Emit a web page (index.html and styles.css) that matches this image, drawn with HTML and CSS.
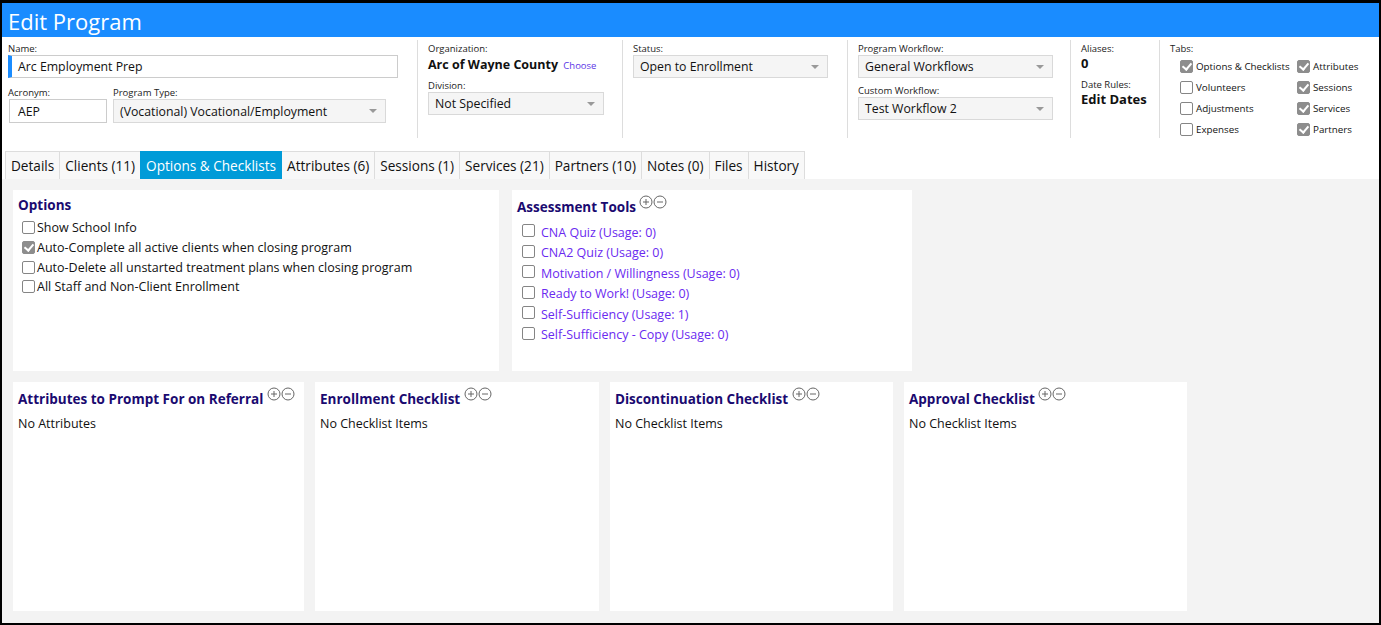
FILE: index.html
```html
<html lang="en">
<head>
    <meta charset="UTF-8">
    <title>Edit Program</title>
    <link rel="stylesheet" href="styles.css">
</head>
<body>
<div class="frame">
    <div class="titlebar">Edit Program</div>

    <div class="fields">
        <div class="col col-main">
            <label class="lbl">Name:</label>
            <div class="input name-input">Arc Employment Prep</div>
            <div class="field-row">
                <div>
                    <label class="lbl">Acronym:</label>
                    <div class="input acronym">AEP</div>
                </div>
                <div>
                    <label class="lbl">Program Type:</label>
                    <div class="select type-select">(Vocational) Vocational/Employment</div>
                </div>
            </div>
        </div>
        <div class="col col-org">
            <label class="lbl">Organization:</label>
            <div class="org">Arc of Wayne County <a class="choose">Choose</a></div>
            <label class="lbl gap">Division:</label>
            <div class="select">Not Specified</div>
        </div>
        <div class="col col-status">
            <label class="lbl">Status:</label>
            <div class="select">Open to Enrollment</div>
        </div>
        <div class="col col-flow">
            <label class="lbl">Program Workflow:</label>
            <div class="select">General Workflows</div>
            <label class="lbl gap">Custom Workflow:</label>
            <div class="select">Test Workflow 2</div>
        </div>
        <div class="col col-alias">
            <label class="lbl">Aliases:</label>
            <div class="big">0</div>
            <label class="lbl gap">Date Rules:</label>
            <div class="big dates">Edit Dates</div>
        </div>
        <div class="col col-tabs">
            <label class="lbl">Tabs:</label>
            <div class="tab-grid">
                <div class="tick"><span class="cb on"></span>Options &amp; Checklists</div>
                <div class="tick"><span class="cb on"></span>Attributes</div>
                <div class="tick"><span class="cb"></span>Volunteers</div>
                <div class="tick"><span class="cb on"></span>Sessions</div>
                <div class="tick"><span class="cb"></span>Adjustments</div>
                <div class="tick"><span class="cb on"></span>Services</div>
                <div class="tick"><span class="cb"></span>Expenses</div>
                <div class="tick"><span class="cb on"></span>Partners</div>
            </div>
        </div>
    </div>

    <div class="tabs">
        <div class="tab">Details</div>
        <div class="tab">Clients (11)</div>
        <div class="tab active">Options &amp; Checklists</div>
        <div class="tab">Attributes (6)</div>
        <div class="tab">Sessions (1)</div>
        <div class="tab">Services (21)</div>
        <div class="tab">Partners (10)</div>
        <div class="tab">Notes (0)</div>
        <div class="tab">Files</div>
        <div class="tab">History</div>
    </div>

    <div class="content">
        <div class="row row-top">
            <div class="panel p-options">
                <h4>Options</h4>
                <div class="opt"><span class="cb"></span>Show School Info</div>
                <div class="opt"><span class="cb on"></span>Auto-Complete all active clients when closing program</div>
                <div class="opt"><span class="cb"></span>Auto-Delete all unstarted treatment plans when closing program</div>
                <div class="opt"><span class="cb"></span>All Staff and Non-Client Enrollment</div>
            </div>
            <div class="panel p-tools">
                <h4>Assessment Tools <span class="pm"><svg viewBox="0 0 14 14"><circle cx="7" cy="7" r="6"/><path d="M7 4v6M4 7h6"/></svg><svg viewBox="0 0 14 14"><circle cx="7" cy="7" r="6"/><path d="M4 7h6"/></svg></span></h4>
                <div class="tool"><span class="cb"></span><a>CNA Quiz (Usage: 0)</a></div>
                <div class="tool"><span class="cb"></span><a>CNA2 Quiz (Usage: 0)</a></div>
                <div class="tool"><span class="cb"></span><a>Motivation / Willingness (Usage: 0)</a></div>
                <div class="tool"><span class="cb"></span><a>Ready to Work! (Usage: 0)</a></div>
                <div class="tool"><span class="cb"></span><a>Self-Sufficiency (Usage: 1)</a></div>
                <div class="tool"><span class="cb"></span><a>Self-Sufficiency - Copy (Usage: 0)</a></div>
            </div>
        </div>
        <div class="row row-bottom">
            <div class="panel p-attr">
                <h4>Attributes to Prompt For on Referral <span class="pm"><svg viewBox="0 0 14 14"><circle cx="7" cy="7" r="6"/><path d="M7 4v6M4 7h6"/></svg><svg viewBox="0 0 14 14"><circle cx="7" cy="7" r="6"/><path d="M4 7h6"/></svg></span></h4>
                <div class="empty">No Attributes</div>
            </div>
            <div class="panel p-check">
                <h4>Enrollment Checklist <span class="pm"><svg viewBox="0 0 14 14"><circle cx="7" cy="7" r="6"/><path d="M7 4v6M4 7h6"/></svg><svg viewBox="0 0 14 14"><circle cx="7" cy="7" r="6"/><path d="M4 7h6"/></svg></span></h4>
                <div class="empty">No Checklist Items</div>
            </div>
            <div class="panel p-check">
                <h4>Discontinuation Checklist <span class="pm"><svg viewBox="0 0 14 14"><circle cx="7" cy="7" r="6"/><path d="M7 4v6M4 7h6"/></svg><svg viewBox="0 0 14 14"><circle cx="7" cy="7" r="6"/><path d="M4 7h6"/></svg></span></h4>
                <div class="empty">No Checklist Items</div>
            </div>
            <div class="panel p-check">
                <h4>Approval Checklist <span class="pm"><svg viewBox="0 0 14 14"><circle cx="7" cy="7" r="6"/><path d="M7 4v6M4 7h6"/></svg><svg viewBox="0 0 14 14"><circle cx="7" cy="7" r="6"/><path d="M4 7h6"/></svg></span></h4>
                <div class="empty">No Checklist Items</div>
            </div>
        </div>
    </div>
</div>
</body>
</html>
```

FILE: styles.css
```css
*{
    box-sizing: border-box;
}
body{
    margin: 0;
    font-family: "Open Sans", "Noto Sans", Arial, sans-serif;
    font-size: 12.5px;
    color: #111;
    background: #fff;
}
.frame{
    width: 1381px;
    height: 625px;
    border: 2px solid #000;
    border-top-width: 3px;
    display: flex;
    flex-direction: column;
    overflow: hidden;
}
.titlebar{
    background: #1a8cff;
    color: #fff;
    height: 34px;
    line-height: 36px;
    font-size: 22px;
    padding-left: 6px;
}

/* header fields */
.fields{
    display: flex;
    height: 103px;
    padding-top: 3px;
}
.col{
    border-right: 1px solid #ddd;
    padding: 2px 10px 0;
    height: 98px;
}
.col-main{ width: 416px; padding-left: 6px; }
.col-org{ width: 205px; }
.col-status{ width: 225px; }
.col-flow{ width: 223px; }
.col-alias{ width: 89px; }
.col-tabs{ border-right: none; flex: 1; }
.lbl{
    display: block;
    font-size: 9.5px;
    line-height: 13px;
    color: #222;
}
.lbl.gap{ margin-top: 4px; }
.col-flow .lbl.gap{ margin-top: 6px; }
.col-alias .lbl.gap{ margin-top: 6px; }
.input, .select{
    height: 23px;
    line-height: 22px;
    border: 1px solid #ccc;
    font-size: 12.3px;
    padding-left: 8px;
    white-space: nowrap;
}
.input{ background: #fff; }
.name-input{
    width: 390px;
    border-left: 4px solid #1a8cff;
    padding-left: 6px;
}
.field-row{
    display: flex;
    gap: 6px;
    margin-top: 8px;
}
.acronym{ width: 98px; height: 24px; line-height: 23px; margin-left: 1px; }
.select{
    position: relative;
    background: #f5f5f5;
    border-color: #d9d9d9;
    padding-left: 6px;
}
.select::after{
    content: "";
    position: absolute;
    right: 8px;
    top: 9px;
    border: 4px solid transparent;
    border-top: 4px solid #999;
    border-bottom: none;
}
.type-select{ width: 273px; height: 24px; line-height: 23px; }
.col-org .select{ width: 176px; }
.col-status .select{ width: 195px; }
.col-flow .select{ width: 195px; }
.org{
    font-weight: bold;
    font-size: 12.5px;
    line-height: 18px;
    margin-top: 1px;
}
.choose{
    font-weight: normal;
    font-size: 9.5px;
    color: #5b35e6;
    margin-left: 2px;
}
.big{
    font-weight: bold;
    font-size: 13px;
    line-height: 17px;
}
.tab-grid{
    display: grid;
    grid-template-columns: 117px auto;
    grid-auto-rows: 21px;
    padding-left: 10px;
    margin-top: 1px;
}
.tick{
    display: flex;
    align-items: center;
    font-size: 9.8px;
    white-space: nowrap;
}
.tick .cb{ margin-right: 3px; }

/* checkboxes */
.cb{
    display: inline-block;
    position: relative;
    flex: none;
    width: 13px;
    height: 13px;
    border: 1px solid #858585;
    border-radius: 2px;
    background: #fff;
}
.cb.on{
    background: #8d8d8d;
    border-color: #8d8d8d;
}
.cb.on::after{
    content: "";
    position: absolute;
    left: 3px;
    top: 0px;
    width: 4px;
    height: 7px;
    border: solid #fff;
    border-width: 0 2px 2px 0;
    transform: rotate(40deg);
}

/* tabs */
.tabs{
    display: flex;
    margin-top: 11px;
    padding-left: 3px;
    height: 28px;
}
.tab{
    background: #f8f8f8;
    border: 1px solid #ddd;
    border-bottom: none;
    margin-right: -1px;
    padding: 0 5px;
    line-height: 27px;
    font-size: 13.6px;
    color: #111;
    white-space: nowrap;
}
.tab.active{
    background: #009bd8;
    border-color: #009bd8;
    color: #fff;
    position: relative;
}

/* content */
.content{
    flex: 1;
    background: #f3f3f3;
    padding: 11px;
}
.row{
    display: flex;
}
.row-top{
    gap: 13px;
    height: 181px;
}
.row-bottom{
    gap: 11px;
    height: 229px;
    margin-top: 11px;
}
.panel{
    background: #fff;
    padding: 5px;
}
.p-options{ width: 486px; }
.p-tools{ width: 400px; }
.p-attr{ width: 291px; }
.p-check{ width: 283px; }
.row-bottom .p-check:nth-child(2){ width: 284px; }
.panel h4{
    margin: 0;
    font-size: 13.5px;
    line-height: 20px;
    color: #1a0a70;
    white-space: nowrap;
}
.pm{
    display: inline-flex;
    vertical-align: 3px;
}
.pm svg{
    width: 14px;
    height: 14px;
    fill: none;
    stroke: #666;
    stroke-width: 1;
}
.opt{
    display: flex;
    align-items: center;
    height: 19.7px;
    padding-left: 4px;
    white-space: nowrap;
}
.p-options h4 + .opt{ margin-top: 3px; }
.opt .cb{ margin-right: 2px; }
.tool{
    display: flex;
    align-items: center;
    height: 20.5px;
    padding-left: 5px;
    white-space: nowrap;
}
.p-tools h4 + .tool{ margin-top: 5px; }
.tool .cb{ margin-right: 6px; margin-top: -3px; }
.tool a{
    color: #6a2af0;
}
.row-bottom h4{ line-height: 18px; }
.empty{
    margin-top: 7px;
    line-height: 17px;
}
```
